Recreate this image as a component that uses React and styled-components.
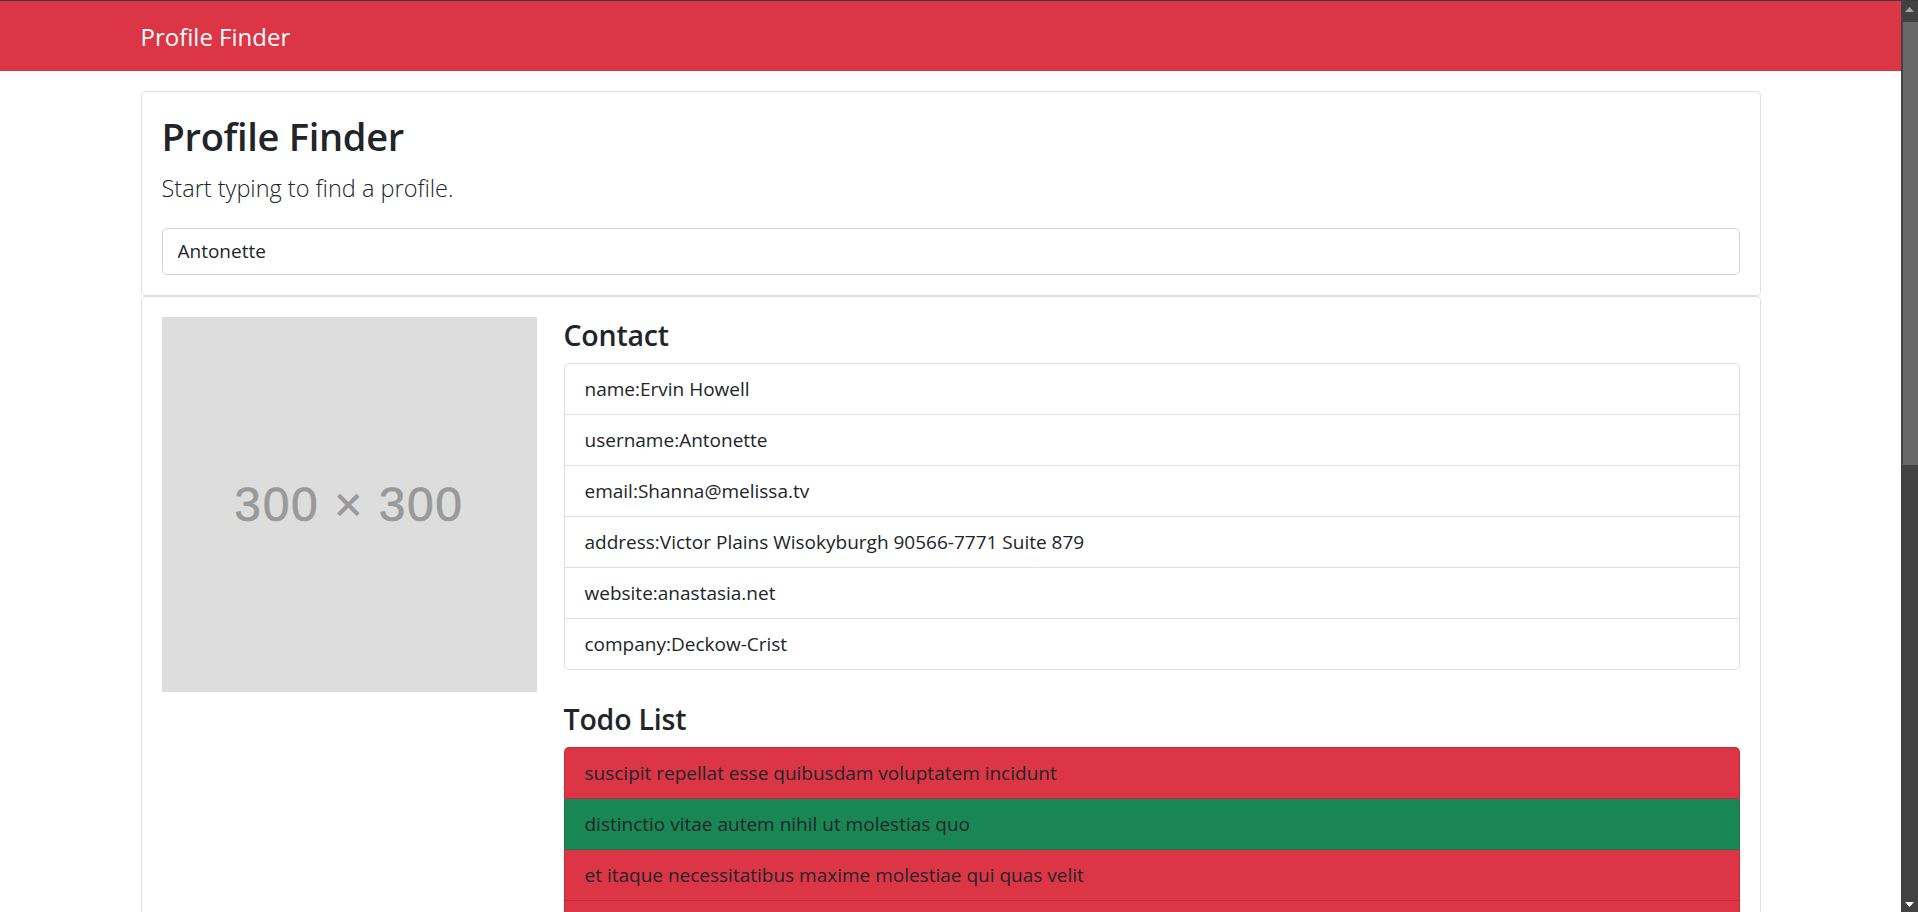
import React from "react";
import styled, { createGlobalStyle } from "styled-components";

const GlobalStyle = createGlobalStyle`
  html, body {
    height: 100%;
  }
  body {
    margin: 0;
    overflow: hidden;
    font-family: "Open Sans", "Noto Sans", "Liberation Sans", sans-serif;
    color: #212529;
    background: #fff;
  }
`;

const Shell = styled.div`
  display: flex;
  height: 100vh;
  border-top: 1px solid #3c3c3c;
  box-sizing: border-box;
`;

const Viewport = styled.div`
  flex: 1;
  min-width: 0;
  overflow: hidden;
`;

const ScrollTrack = styled.div`
  flex: 0 0 17px;
  background: #424242;
  display: flex;
  flex-direction: column;
`;

const ScrollArrow = styled.div`
  height: 16px;
  display: flex;
  align-items: center;
  justify-content: center;
  margin-top: ${({ bottom }) => (bottom ? "auto" : "0")};
`;

const ScrollThumb = styled.div`
  margin: 5px 0 0 2px;
  height: 443px;
  background: #686868;
`;

const Navbar = styled.nav`
  background: #dc3545;
  height: 70px;
  display: flex;
  align-items: center;
`;

const Container = styled.div`
  max-width: 1620px;
  margin: 0 auto;
  padding: 0 15px;
  width: 100%;
  box-sizing: content-box;
  margin-top: ${({ top }) => top || 0}px;
`;

const Brand = styled.a`
  color: #fff;
  font-size: 24px;
  line-height: 37px;
  text-decoration: none;
`;

const Card = styled.div`
  border: 1px solid rgba(0, 0, 0, 0.125);
  border-radius: 5px;
  padding: 20px;
  background: #fff;
`;

const Title = styled.h2`
  margin: 0 0 10px;
  font-size: 38px;
  line-height: 48px;
  font-weight: 600;
  letter-spacing: -0.3px;
`;

const Lead = styled.p`
  margin: 0 0 20px;
  font-size: 23.5px;
  line-height: 37.5px;
  font-weight: 300;
`;

const SearchInput = styled.input`
  display: block;
  width: 100%;
  box-sizing: border-box;
  height: 47px;
  padding: 7px 15px;
  font-family: inherit;
  font-size: 19px;
  color: #212529;
  border: 1px solid #ced4da;
  border-radius: 5px;
  outline: none;
`;

const Row = styled.div`
  display: flex;
  margin: 0 -15px;
`;

const Col = styled.div`
  flex: 0 0 ${({ span }) => (span / 12) * 100}%;
  box-sizing: border-box;
  padding: 0 15px;
  min-width: 0;
`;

const Placeholder = styled.div`
  width: 375px;
  height: 375px;
  background: #dddddd;
  color: #999999;
  display: flex;
  align-items: center;
  justify-content: center;
  font-family: "Liberation Sans", Arial, sans-serif;
  font-size: 48px;
  letter-spacing: 1.6px;
  -webkit-text-stroke: 0.6px #999999;
`;

const Heading = styled.h4`
  margin: ${({ spaced }) => (spaced ? 31 : 0)}px 0 10px;
  font-size: 28.5px;
  line-height: 36px;
  font-weight: 600;
  letter-spacing: -0.2px;
`;

const ListGroup = styled.ul`
  list-style: none;
  margin: 0;
  padding: 0;
  display: flex;
  flex-direction: column;
  border-radius: 5px;
`;

const variants = {
  plain: "#fff",
  danger: "#dc3545",
  success: "#198754",
};

const ListItem = styled.li`
  padding: 10px 20px;
  font-size: 19px;
  line-height: 30px;
  background: ${({ variant }) => variants[variant || "plain"]};
  border: 1px solid rgba(0, 0, 0, 0.125);
  border-top-width: 0;

  &:first-child {
    border-top-width: 1px;
    border-top-left-radius: 5px;
    border-top-right-radius: 5px;
  }
  &:last-child {
    border-bottom-left-radius: 5px;
    border-bottom-right-radius: 5px;
  }
`;

const contact = [
  ["name", "Ervin Howell"],
  ["username", "Antonette"],
  ["email", "Shanna@melissa.tv"],
  ["address", "Victor Plains Wisokyburgh 90566-7771 Suite 879"],
  ["website", "anastasia.net"],
  ["company", "Deckow-Crist"],
];

const todos = [
  ["suscipit repellat esse quibusdam voluptatem incidunt", false],
  ["distinctio vitae autem nihil ut molestias quo", true],
  ["et itaque necessitatibus maxime molestiae qui quas velit", false],
  ["adipisci non ad dicta qui amet quaerat doloribus ea", false],
  ["voluptas quo tenetur perspiciatis explicabo natus", true],
  ["aliquam aut quasi", true],
  ["veritatis pariatur delectus", true],
  ["nesciunt totam sit blanditiis sit", false],
  ["laborum aut in quam", false],
  ["nemo perspiciatis repellat ut dolor libero commodi blanditiis omnis", true],
];

const Arrow = ({ down, color }) => (
  <svg width="9" height="5" viewBox="0 0 9 5">
    <path d={down ? "M0 0H9L4.5 5Z" : "M0 5H9L4.5 0Z"} fill={color} />
  </svg>
);

const App = () => {
  return (
    <Shell>
      <GlobalStyle />
      <Viewport>
        <Navbar>
          <Container>
            <Brand href="#">Profile Finder</Brand>
          </Container>
        </Navbar>
        <Container top={20}>
          <Card>
            <Title>Profile Finder</Title>
            <Lead>Start typing to find a profile.</Lead>
            <SearchInput type="text" defaultValue="Antonette" />
          </Card>
          <Card>
            <Row>
              <Col span={3}>
                <Placeholder>300 × 300</Placeholder>
              </Col>
              <Col span={9}>
                <Heading>Contact</Heading>
                <ListGroup>
                  {contact.map(([key, value]) => (
                    <ListItem key={key}>
                      {key}:{value}
                    </ListItem>
                  ))}
                </ListGroup>
                <Heading spaced>Todo List</Heading>
                <ListGroup>
                  {todos.map(([title, done]) => (
                    <ListItem key={title} variant={done ? "success" : "danger"}>
                      {title}
                    </ListItem>
                  ))}
                </ListGroup>
              </Col>
            </Row>
          </Card>
        </Container>
      </Viewport>
      <ScrollTrack>
        <ScrollArrow>
          <Arrow color="#a3a3a3" />
        </ScrollArrow>
        <ScrollThumb />
        <ScrollArrow bottom>
          <Arrow down color="#ffffff" />
        </ScrollArrow>
      </ScrollTrack>
    </Shell>
  );
};

export default App;
